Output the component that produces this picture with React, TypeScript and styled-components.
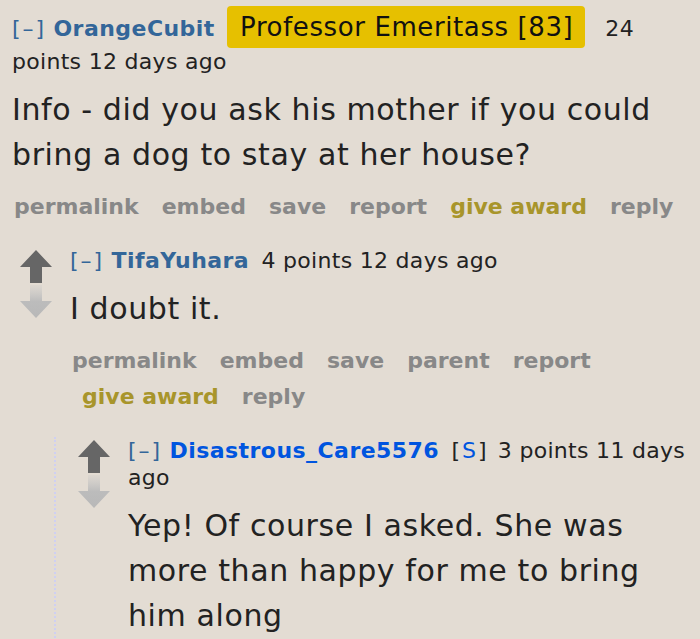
import React from 'react';
import styled, { createGlobalStyle } from 'styled-components';

const GlobalStyle = createGlobalStyle`
  html, body {
    margin: 0;
    padding: 0;
    background: #e3dcd3;
  }
  body {
    font-family: "DejaVu Sans", Verdana, sans-serif;
    color: #222;
    overflow: hidden;
  }
`;

interface CommentData {
  author: string;
  submitter?: boolean;
  flair?: string;
  points: string;
  age: string;
  body: string[];
  links: string[];
  children?: CommentData[];
  arrows?: boolean;
}

const thread: CommentData = {
  author: 'OrangeCubit',
  flair: 'Professor Emeritass [83]',
  points: '24 points',
  age: '12 days ago',
  body: ['Info - did you ask his mother if you could bring a dog to stay at her house?'],
  links: ['permalink', 'embed', 'save', 'report', 'give award', 'reply'],
  arrows: false,
  children: [
    {
      author: 'TifaYuhara',
      points: '4 points',
      age: '12 days ago',
      body: ['I doubt it.'],
      links: ['permalink', 'embed', 'save', 'parent', 'report', 'give award', 'reply'],
      arrows: true,
      children: [
        {
          author: 'Disastrous_Care5576',
          submitter: true,
          points: '3 points',
          age: '11 days ago',
          body: ['Yep! Of course I asked. She was more than happy for me to bring him along'],
          links: [],
          arrows: true,
        },
      ],
    },
  ],
};

function UpArrow() {
  return (
    <svg width="32" height="33" viewBox="0 0 32 33">
      <path d="M16 0 L32 17 L22 17 L22 33 L10 33 L10 17 L0 17 Z" fill="#666" />
    </svg>
  );
}

function DownArrow() {
  return (
    <svg width="32" height="33" viewBox="0 0 32 33">
      <defs>
        <linearGradient id="fade" x1="0" y1="0" x2="0" y2="1">
          <stop offset="0" stopColor="#c4c4c4" stopOpacity="0.2" />
          <stop offset="0.5" stopColor="#bcbcbc" />
          <stop offset="1" stopColor="#b8b8b8" />
        </linearGradient>
      </defs>
      <path d="M10 0 L22 0 L22 16 L32 16 L16 33 L0 16 L10 16 Z" fill="url(#fade)" />
    </svg>
  );
}

function Comment({ data }: { data: CommentData }) {
  return (
    <S.Comment>
      <S.Row>
        {data.arrows && (
          <S.Midcol>
            <UpArrow />
            <DownArrow />
          </S.Midcol>
        )}
        <S.Entry>
          <S.Tagline>
            <S.Expand>[–]</S.Expand> <S.Author $submitter={data.submitter}>{data.author}</S.Author>{' '}
            {data.submitter && (
              <>
                <S.Bracket>
                  [<S.Sub>S</S.Sub>]
                </S.Bracket>{' '}
              </>
            )}
            {data.flair && <S.Flair>{data.flair}</S.Flair>}
            <S.Score $spaced={!!data.flair}>{data.points}</S.Score> {data.age}
          </S.Tagline>
          <S.Body>
            {data.body.map(p => (
              <p key={p}>{p}</p>
            ))}
          </S.Body>
          {data.links.length > 0 && (
            <S.Buttons>
              {data.links.map(l => (
                <S.Link key={l} $award={l === 'give award'}>
                  {l}
                </S.Link>
              ))}
            </S.Buttons>
          )}
        </S.Entry>
      </S.Row>
      {data.children && (
        <S.Child $nested={!!data.arrows}>
          {data.children.map(c => (
            <Comment key={c.author} data={c} />
          ))}
        </S.Child>
      )}
    </S.Comment>
  );
}

export default function App() {
  return (
    <>
      <GlobalStyle />
      <S.Page>
        <Comment data={thread} />
      </S.Page>
    </>
  );
}

const S = {
  Page: styled.div`
    padding: 6px 0 0 12px;
    width: 690px;
    box-sizing: border-box;
  `,
  Comment: styled.div`
    display: flex;
    flex-direction: column;
  `,
  Row: styled.div`
    display: flex;
    align-items: flex-start;
  `,
  Midcol: styled.div`
    width: 58px;
    flex-shrink: 0;
    display: flex;
    flex-direction: column;
    align-items: flex-start;
    padding: 3px 0 0 8px;
    box-sizing: border-box;
    gap: 2px;
  `,
  Entry: styled.div`
    flex: 1;
    min-width: 0;
  `,
  Tagline: styled.div`
    font-size: 22px;
    letter-spacing: 0.3px;
    line-height: 27px;
    color: #222;
  `,
  Expand: styled.span`
    color: #369;
    letter-spacing: 2px;
  `,
  Author: styled.span<{ $submitter?: boolean }>`
    font-weight: bold;
    letter-spacing: 0.45px;
    color: ${p => (p.$submitter ? '#0055df' : '#369')};
    margin-right: 5px;
  `,
  Bracket: styled.span`
    color: #222;
    letter-spacing: 2px;
    margin-right: 2px;
  `,
  Sub: styled.span`
    color: #0055df;
  `,
  Flair: styled.span`
    display: inline-block;
    background: #e6c000;
    color: #111;
    font-size: 26px;
    letter-spacing: 0.6px;
    line-height: 30px;
    padding: 6px 12px 6px 13px;
    border-radius: 4px;
    margin-right: 4px;
  `,
  Score: styled.span<{ $spaced: boolean }>`
    margin-left: ${p => (p.$spaced ? '16px' : '0')};
  `,
  Body: styled.div`
    font-size: 30px;
    letter-spacing: 0.6px;
    line-height: 45px;
    margin: 12px 0 15px;
    p {
      margin: 0;
    }
  `,
  Buttons: styled.ul`
    list-style: none;
    margin: 0 0 16px;
    padding: 0;
    display: flex;
    flex-wrap: wrap;
    row-gap: 6px;
  `,
  Link: styled.li<{ $award: boolean }>`
    font-size: 22px;
    line-height: 30px;
    font-weight: bold;
    color: ${p => (p.$award ? '#a8952b' : '#888')};
    padding: 0 11px 0 12px;
    &:first-child {
      padding-left: 2px;
    }
  `,
  Child: styled.div<{ $nested: boolean }>`
    margin-left: ${p => (p.$nested ? '42px' : '0')};
    padding-left: ${p => (p.$nested ? '14px' : '0')};
    padding-bottom: 40px;
    border-left: ${p => (p.$nested ? '2px dotted #cfd0f2' : 'none')};
    margin-top: 9px;
  `,
};
